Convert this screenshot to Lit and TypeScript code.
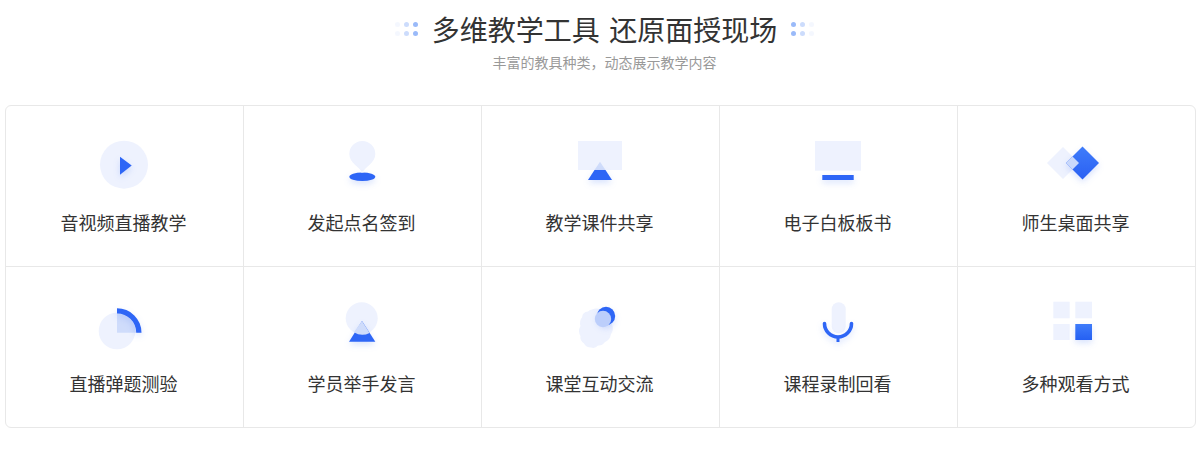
import { LitElement, html, css, svg } from "lit";
import { customElement } from "lit/decorators.js";

const D = "#2e66f6";
const L = "#eef2fe";
const P = "#cfdcfb";

const items = [
  { label: "音视频直播教学", icon: svg`<circle cx="30" cy="29.7" r="24" fill="${L}"/><path class="sh" d="M26 21.7 L37.7 30.5 L26 39.7Z" fill="${D}"/>` },
  { label: "发起点名签到", icon: svg`<path d="M30.3 38 C28 32 17.3 28 17.3 19 A13 13 0 0 1 43.3 19 C43.3 28 32.6 32 30.3 38Z" fill="${L}"/><ellipse class="sh" cx="30.3" cy="41.7" rx="13" ry="4.3" fill="${D}"/><path d="M28.7 37.7 L31.9 37.7 L30.3 36Z" fill="#fff" opacity=".7"/>` },
  { label: "教学课件共享", icon: svg`<rect x="8" y="6" width="44" height="29" fill="${L}"/><path d="M30 26.7 L24.5 35 L35.5 35Z" fill="${P}"/><path class="sh" d="M24.5 35 L35.5 35 L42 45 L18 45Z" fill="${D}"/>` },
  { label: "电子白板板书", icon: svg`<rect x="7" y="6" width="46" height="29.7" fill="${L}"/><rect class="sh" x="14.3" y="40" width="31.4" height="5" fill="${D}"/>` },
  { label: "师生桌面共享", icon: svg`<defs><linearGradient id="g1" x1="0" y1="0" x2="0" y2="1"><stop offset="0" stop-color="#3f7cfa"/><stop offset="1" stop-color="#2a60f3"/></linearGradient></defs><path d="M17 12 L33 28 L17 44 L1 28Z" fill="${L}"/><path class="sh" d="M36.5 11.5 L53 28 L36.5 44.5 L20 28Z" fill="url(#g1)"/><path d="M26.5 21.5 L33 28 L26.5 34.5 L20 28Z" fill="#c9d8fb"/>` },
  { label: "直播弹题测验", icon: svg`<circle cx="23" cy="35" r="18.3" fill="${L}"/><path d="M23 36.7 L23 17.7 A19 19 0 0 1 42 36.7Z" fill="${P}"/><path class="sh" d="M23 12.2 A24.5 24.5 0 0 1 47.5 36.7 L42.2 36.7 A19.2 19.2 0 0 0 23 17.5Z" fill="${D}"/>` },
  { label: "学员举手发言", icon: svg`<circle cx="29.7" cy="22.3" r="16" fill="${L}"/><path class="sh" d="M30 25 L43.3 45.7 L17 45.7Z" fill="${D}"/><path d="M30 25 L37.6 36.9 A16 16 0 0 1 21.9 36.2Z" fill="${P}"/>` },
  { label: "课堂互动交流", icon: svg`<path d="M22 13.5 Q27 11.5 31 14 Q37 13.5 39 18 Q43 22 42 28 Q44 34 41 38 Q40 44 35 46 Q32 50 28 49.5 Q25 53 21 51.5 Q16 51.5 14 47.5 Q9.5 44 10.5 40 Q7.5 35 10.5 30 Q9 25 12 21.5 Q12.5 16 18 15.5 Q20 13.5 22 13.5Z" fill="${L}"/><circle class="sh" cx="36" cy="20" r="9.2" fill="${D}"/><circle cx="33" cy="23" r="8.2" fill="#bccefb"/>` },
  { label: "课程录制回看", icon: svg`<rect x="23.7" y="6.3" width="14" height="31" rx="7" fill="${L}"/><g class="sh"><path d="M16.5 27.5 A13.5 13.5 0 0 0 43.5 27.5" fill="none" stroke="${D}" stroke-width="3.6" stroke-linecap="round"/><path d="M30 40 L30 46" stroke="${D}" stroke-width="3"/></g>` },
  { label: "多种观看方式", icon: svg`<defs><linearGradient id="g2" x1="0" y1="0" x2="0" y2="1"><stop offset="0" stop-color="#3f7cfa"/><stop offset="1" stop-color="#2560f2"/></linearGradient></defs><rect x="7.3" y="5.7" width="16.4" height="16.6" fill="${L}"/><rect x="29.3" y="5.7" width="16.7" height="16.6" fill="${L}"/><rect x="7.3" y="28" width="16.4" height="16" fill="${L}"/><rect class="sh" x="29.3" y="28" width="16.7" height="16" fill="url(#g2)"/>` },
];

const dots = (ops: number[]) => html`<div class="dots">${ops.map((o) => html`<i style="opacity:${o}"></i>`)}</div>`;

@customElement("app-root")
export class AppRoot extends LitElement {
  static styles = css`
    :host {
      display: block;
      font-family: "Noto Sans CJK SC", "Noto Sans", sans-serif;
      background: #fff;
      height: 452px;
      overflow: hidden;
    }
    .head {
      height: 105px;
      box-sizing: border-box;
      padding-top: 8px;
      padding-left: 10px;
      display: flex;
      flex-direction: column;
      align-items: center;
    }
    .title-row {
      display: flex;
      align-items: center;
      gap: 14px;
      height: 42px;
    }
    h1 {
      margin: 0;
      font-size: 28px;
      font-weight: 400;
      line-height: 42px;
      color: #333;
      white-space: pre;
      word-spacing: 3px;
    }
    .dots {
      display: grid;
      grid-template-columns: repeat(3, 5px);
      grid-auto-rows: 5px;
      gap: 4px;
      width: 23px;
    }
    .dots i {
      display: block;
      width: 5px;
      height: 5px;
      border-radius: 50%;
      background: #8fb2f8;
    }
    .sub {
      margin: 0;
      margin-top: 2px;
      font-size: 14px;
      line-height: 20px;
      color: #999;
    }
    .grid {
      margin-left: 5px;
      width: 1191px;
      box-sizing: border-box;
      border: 1px solid #e8e8e8;
      border-radius: 6px;
      display: grid;
      grid-template-columns: repeat(4, 238px) 237px;
      grid-template-rows: 161px 160px;
    }
    .cell {
      box-sizing: border-box;
      border-right: 1px solid #e8e8e8;
      border-bottom: 1px solid #e8e8e8;
      display: flex;
      flex-direction: column;
      align-items: center;
      padding-top: 29px;
      padding-right: 2px;
    }
    .cell:nth-child(5n) {
      border-right: none;
    }
    .cell:nth-child(n + 6) {
      border-bottom: none;
    }
    svg {
      display: block;
      width: 60px;
      height: 60px;
      flex: none;
      overflow: visible;
    }
    .sh {
      filter: drop-shadow(0 3px 3px rgba(46, 102, 246, 0.18));
    }
    .label {
      margin-top: 14px;
      font-size: 18px;
      line-height: 27px;
      color: #333;
    }
  `;

  render() {
    return html`
      <div class="head">
        <div class="title-row">
          ${dots([0.1, 0.45, 0.9, 0.1, 0.45, 0.9])}
          <h1>多维教学工具 还原面授现场</h1>
          ${dots([0.9, 0.45, 0.1, 0.9, 0.45, 0.1])}
        </div>
        <p class="sub">丰富的教具种类，动态展示教学内容</p>
      </div>
      <div class="grid">
        ${items.map(
          (it) => html`<div class="cell">
            <svg viewBox="0 0 60 60">${it.icon}</svg>
            <div class="label">${it.label}</div>
          </div>`
        )}
      </div>
    `;
  }
}
